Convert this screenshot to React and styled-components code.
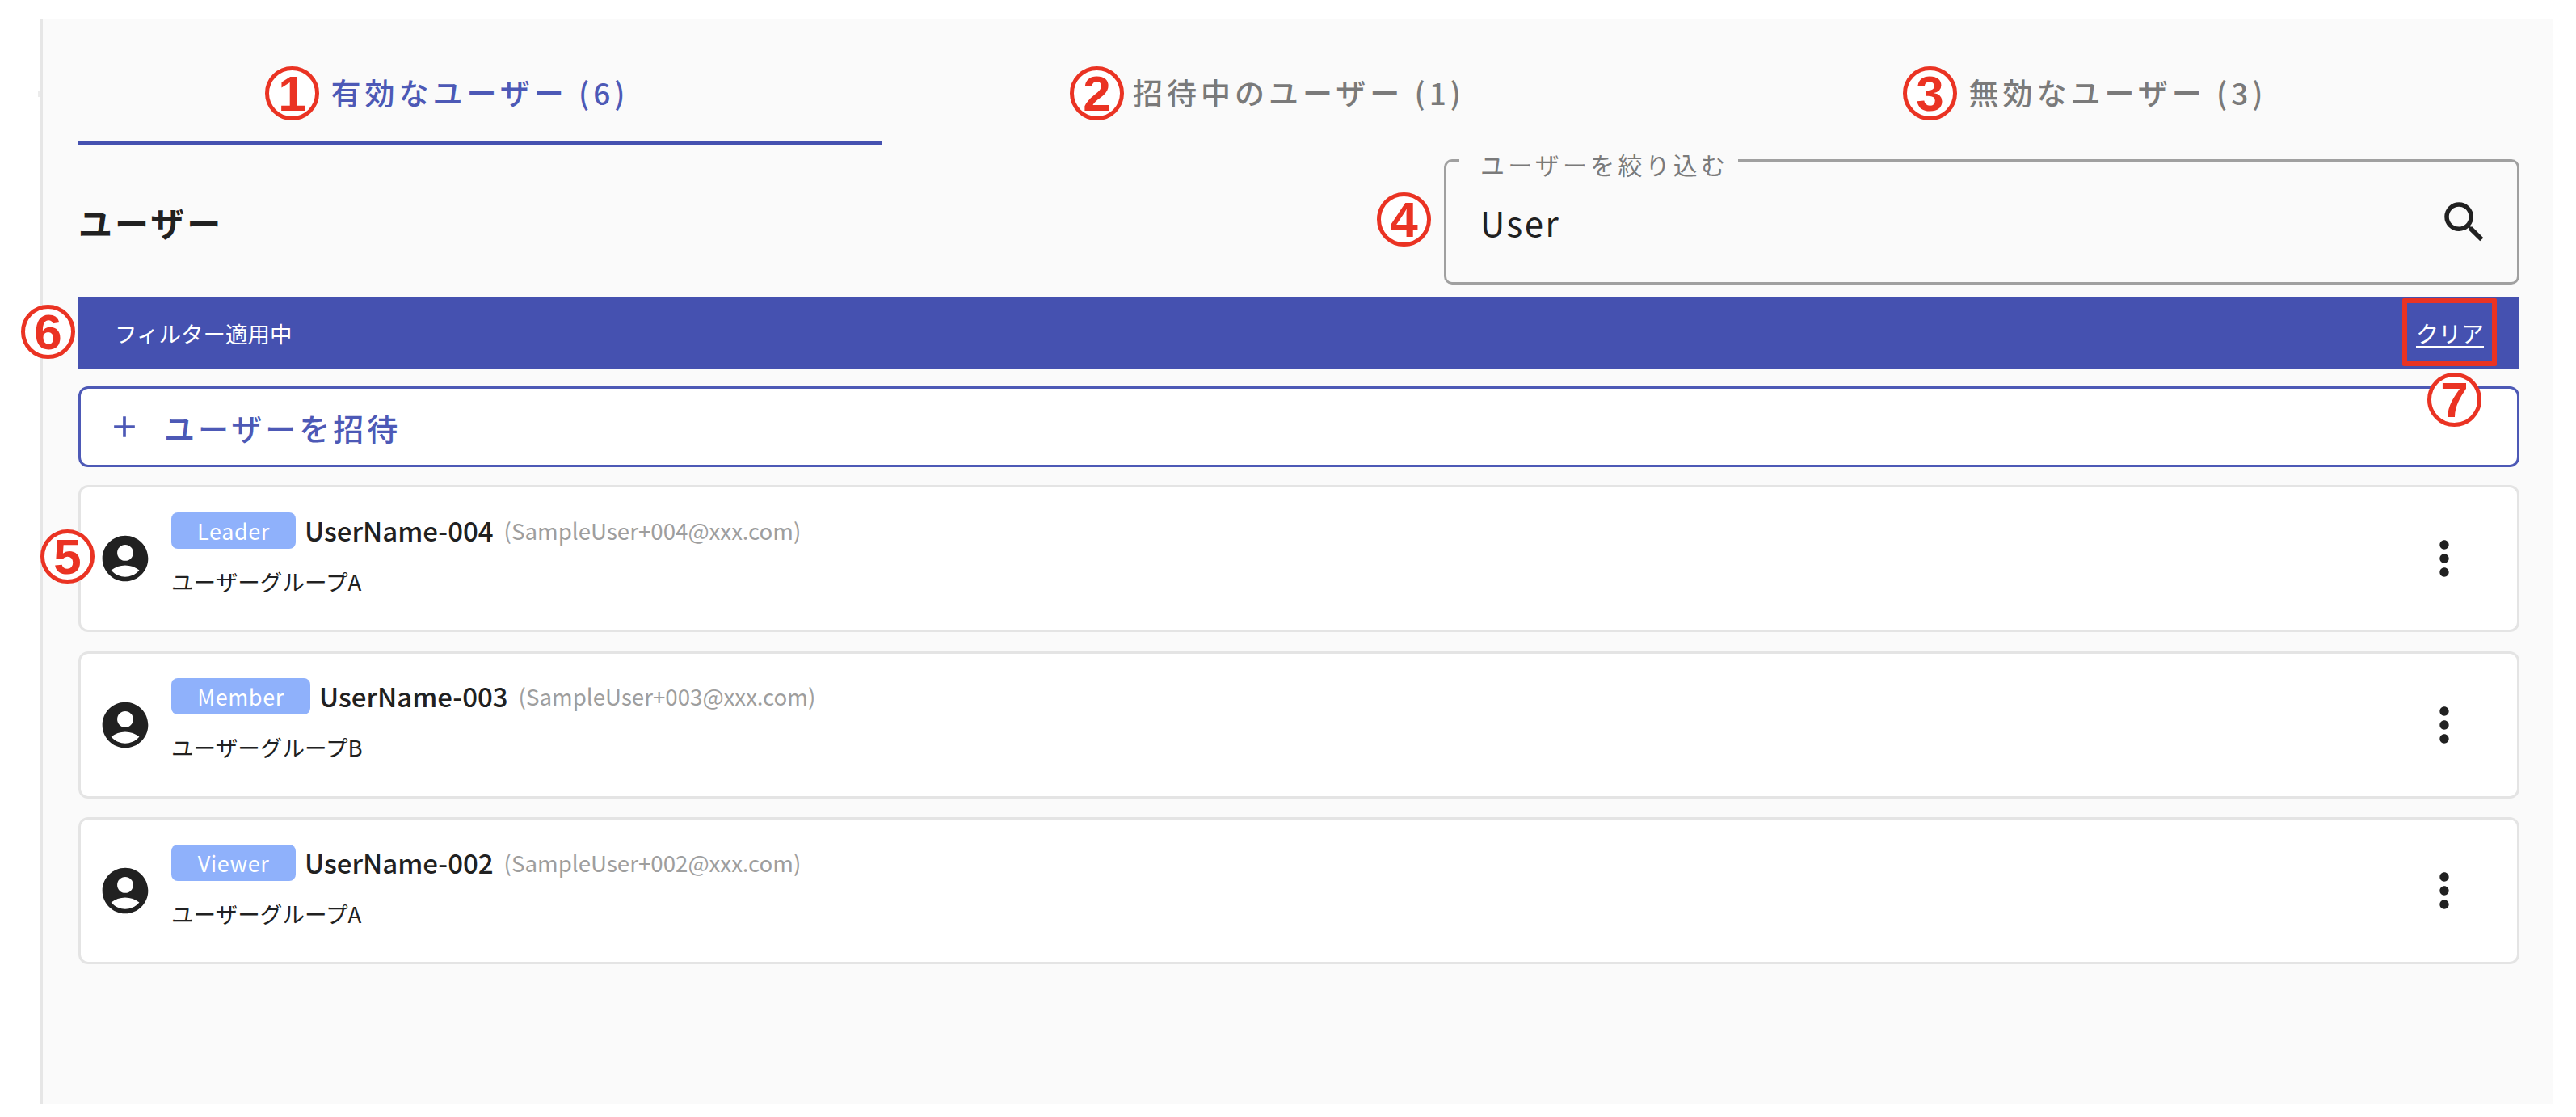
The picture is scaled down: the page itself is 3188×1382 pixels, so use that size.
import React from 'react';
import styled, { createGlobalStyle } from 'styled-components';
import { MdAccountCircle, MdMoreVert, MdSearch, MdAdd } from 'react-icons/md';

const BLUE = '#4551b0';
const BLUE_TEXT = '#4d59b6';
const RED = '#ea3323';

const GlobalStyle = createGlobalStyle`
  html, body {
    margin: 0;
    padding: 0;
    background: #fff;
  }
  body {
    font-family: "Noto Sans CJK JP", "Noto Sans", sans-serif;
    color: #212121;
  }
  * {
    box-sizing: border-box;
  }
`;

const Page = styled.div`
  position: relative;
  width: 3188px;
  height: 1382px;
  overflow: hidden;
  padding: 24px 29px 16px 50px;
`;

const Panel = styled.main`
  position: relative;
  height: 100%;
  background: #fafafa;
  border-left: 3px solid #e6e6e6;
  padding: 0 41px 0 44px;

  &::before {
    content: '';
    position: absolute;
    left: -6px;
    top: 89px;
    width: 3px;
    height: 7px;
    background: #ececec;
  }
`;

const Tabs = styled.div`
  display: grid;
  grid-template-columns: repeat(3, 994px);
  column-gap: 19.5px;
`;

const Tab = styled.div`
  height: 156px;
  padding-top: 59px;
  text-align: center;
  font-size: 37px;
  line-height: 62px;
  font-weight: 500;
  letter-spacing: 5px;
  color: ${props => (props.$active ? BLUE_TEXT : '#7a7a7a')};
  border-bottom: 6px solid ${props => (props.$active ? BLUE : 'transparent')};
`;

const Toolbar = styled.div`
  display: flex;
  justify-content: space-between;
  align-items: center;
  margin-top: 17px;
`;

const Heading = styled.h2`
  margin: 0;
  font-size: 42px;
  line-height: 60px;
  font-weight: 700;
  letter-spacing: 3px;
  color: #212121;
`;

const SearchBox = styled.div`
  position: relative;
  width: 1331px;
  height: 155px;
  display: flex;
  align-items: center;
  justify-content: space-between;
  padding: 0 32px 0 42px;
  border: 3px solid #a0a0a0;
  border-radius: 10px;
`;

const SearchLabel = styled.span`
  position: absolute;
  top: -14px;
  left: 16px;
  padding: 0 12px 0 26px;
  background: #fafafa;
  font-size: 30px;
  line-height: 34px;
  letter-spacing: 4.2px;
  color: #7a7a7a;
  white-space: nowrap;
`;

const SearchValue = styled.span`
  font-size: 42px;
  line-height: 60px;
  letter-spacing: 2.5px;
  color: #212121;
`;

const FilterBanner = styled.div`
  display: flex;
  align-items: center;
  justify-content: space-between;
  height: 89px;
  margin-top: 15px;
  padding: 0 44px 0 45px;
  background: ${BLUE};
  color: #fff;
  font-size: 27.5px;
  line-height: 40px;
  font-weight: 400;
`;

const ClearLink = styled.a`
  color: #fff;
  font-size: 28px;
  text-decoration: underline;
  text-underline-offset: 4px;
`;

const InviteButton = styled.button`
  display: flex;
  align-items: center;
  gap: 27px;
  width: 100%;
  height: 100px;
  margin-top: 22px;
  padding: 0 0 0 32px;
  background: #fff;
  border: 3px solid ${BLUE_TEXT};
  border-radius: 12px;
  color: ${BLUE_TEXT};
  font-family: inherit;
  font-size: 38px;
  font-weight: 500;
  letter-spacing: 4px;
`;

const UserList = styled.div`
  display: flex;
  flex-direction: column;
  gap: 23.5px;
  margin-top: 22px;
`;

const UserCard = styled.article`
  display: flex;
  align-items: center;
  height: 182px;
  padding: 0 56px 0 21px;
  background: #fff;
  border: 3px solid #e4e4e4;
  border-radius: 12px;
`;

const Avatar = styled(MdAccountCircle)`
  flex: none;
  width: 68px;
  height: 68px;
  color: #212121;
`;

const UserInfo = styled.div`
  flex: 1;
  margin-left: 23px;
  padding-bottom: 12px;
`;

const UserLine = styled.div`
  display: flex;
  align-items: center;
`;

const RoleChip = styled.span`
  display: flex;
  align-items: center;
  justify-content: center;
  width: ${props => props.$width}px;
  height: 45px;
  background: #8fb1fb;
  border-radius: 8px;
  color: #fff;
  font-size: 27px;
  letter-spacing: 0.6px;
`;

const UserName = styled.span`
  margin-left: 11px;
  font-size: 33px;
  line-height: 45px;
  font-weight: 500;
  color: #212121;
`;

const UserMail = styled.span`
  margin-left: 13px;
  font-size: 27.7px;
  line-height: 45px;
  color: #9e9e9e;
`;

const UserGroup = styled.div`
  margin-top: 22px;
  font-size: 27.6px;
  line-height: 36px;
  color: #212121;
`;

const MoreIcon = styled(MdMoreVert)`
  flex: none;
  width: 68px;
  height: 68px;
  color: #212121;
`;

const SearchIcon = styled(MdSearch)`
  flex: none;
  width: 66px;
  height: 66px;
  color: #212121;
`;

// red marks laid over the screenshot
const Mark = styled.span`
  position: absolute;
  left: ${props => props.$x}px;
  top: ${props => props.$y}px;
  width: 67px;
  height: 67px;
  display: flex;
  align-items: center;
  justify-content: center;
  background: #fff;
  border: 5px solid ${RED};
  border-radius: 50%;
  color: ${RED};
  font-family: "Liberation Sans", Arial, sans-serif;
  font-size: 62px;
  font-weight: 700;
  line-height: 1;
`;

const MarkBox = styled.span`
  position: absolute;
  left: 2973px;
  top: 369px;
  width: 117px;
  height: 84px;
  border: 6px solid ${RED};
  border-radius: 2px;
`;

const marks = [
  { n: 1, x: 328, y: 82 },
  { n: 2, x: 1324, y: 82 },
  { n: 3, x: 2355, y: 82 },
  { n: 4, x: 1704, y: 238 },
  { n: 5, x: 50, y: 655 },
  { n: 6, x: 26, y: 377 },
  { n: 7, x: 3004, y: 461 },
];

const users = [
  { role: 'Leader', chip: 154, name: 'UserName-004', mail: '(SampleUser+004@xxx.com)', group: 'ユーザーグループA' },
  { role: 'Member', chip: 172, name: 'UserName-003', mail: '(SampleUser+003@xxx.com)', group: 'ユーザーグループB' },
  { role: 'Viewer', chip: 154, name: 'UserName-002', mail: '(SampleUser+002@xxx.com)', group: 'ユーザーグループA' },
];

export default function App() {
  return (
    <Page>
      <GlobalStyle />
      <Panel>
        <Tabs>
          <Tab $active>有効なユーザー (6)</Tab>
          <Tab>招待中のユーザー (1)</Tab>
          <Tab>無効なユーザー (3)</Tab>
        </Tabs>

        <Toolbar>
          <Heading>ユーザー</Heading>
          <SearchBox>
            <SearchLabel>ユーザーを絞り込む</SearchLabel>
            <SearchValue>User</SearchValue>
            <SearchIcon />
          </SearchBox>
        </Toolbar>

        <FilterBanner>
          <span>フィルター適用中</span>
          <ClearLink>クリア</ClearLink>
        </FilterBanner>

        <InviteButton>
          <MdAdd size={44} />
          ユーザーを招待
        </InviteButton>

        <UserList>
          {users.map(user => (
            <UserCard key={user.name}>
              <Avatar />
              <UserInfo>
                <UserLine>
                  <RoleChip $width={user.chip}>{user.role}</RoleChip>
                  <UserName>{user.name}</UserName>
                  <UserMail>{user.mail}</UserMail>
                </UserLine>
                <UserGroup>{user.group}</UserGroup>
              </UserInfo>
              <MoreIcon />
            </UserCard>
          ))}
        </UserList>
      </Panel>

      {marks.map(mark => (
        <Mark key={mark.n} $x={mark.x} $y={mark.y}>{mark.n}</Mark>
      ))}
      <MarkBox />
    </Page>
  );
}
